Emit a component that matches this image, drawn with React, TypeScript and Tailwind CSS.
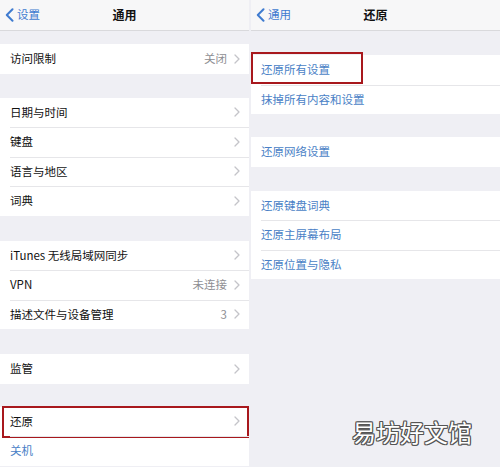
import React from 'react';

const FONT = '"Noto Sans CJK SC", "Liberation Sans", sans-serif';

type Row = { label: string; detail?: string; chevron?: boolean; blue?: boolean; mark?: 'full' | 'text' };

const Chevron = () => (
  <svg width="6" height="10" viewBox="0 0 6 10" className="ml-[7px]">
    <polyline points="1,1 5,5 1,9" fill="none" stroke="#c4c4c9" strokeWidth="1.3" strokeLinecap="round" strokeLinejoin="round" />
  </svg>
);

const BackChevron = () => (
  <svg width="9" height="14" viewBox="0 0 9 14">
    <polyline points="7.5,1.2 1.8,7 7.5,12.8" fill="none" stroke="#3f7bd0" strokeWidth="2" strokeLinecap="round" strokeLinejoin="round" />
  </svg>
);

const NavBar = ({ back, title }: { back: string; title: string }) => (
  <div className="relative h-[31px] bg-[#f7f7f8] border-b border-[#d9d9dc] flex items-center">
    <div className="flex items-center pl-[5px] gap-[3px] text-[#3f7bd0] text-[11.5px]">
      <BackChevron />
      <span>{back}</span>
    </div>
    <div className="absolute inset-0 flex items-center justify-center text-[12px] font-semibold text-[#111]">{title}</div>
  </div>
);

const Section = ({ rows, top }: { rows: Row[]; top: number }) => (
  <div className="bg-white" style={{ marginTop: top }}>
    {rows.map((r, i) => (
      <div key={r.label} className="relative h-[29.5px] flex items-center pl-[10px]">
        {i > 0 && <div className="absolute top-0 left-[10px] right-0 h-px bg-[#e6e6e9]" />}
        <span className={`text-[11.5px] ${r.blue ? 'text-[#4a7fc6]' : 'text-[#111]'}`}>{r.label}</span>
        <div className="ml-auto flex items-center pr-[9px]">
          {r.detail && <span className="text-[11.5px] text-[#8e8e93]">{r.detail}</span>}
          {r.chevron && <Chevron />}
        </div>
        {r.mark === 'full' && (
          <div className="absolute left-[2px] right-0 top-[-1px] bottom-[-2px] border-2 border-[#a8181d]" />
        )}
        {r.mark === 'text' && (
          <div className="absolute left-0 w-[112px] top-[-3px] h-[32px] border-2 border-[#a8181d]" />
        )}
      </div>
    ))}
  </div>
);

const App: React.FC = () => {
  return (
    <div className="relative w-[500px] h-[467px] overflow-hidden bg-[#efeff4] flex" style={{ fontFamily: FONT }}>
      {/* left: 通用 */}
      <div className="w-[249px]">
        <NavBar back="设置" title="通用" />
        <Section top={13} rows={[{ label: '访问限制', detail: '关闭', chevron: true }]} />
        <Section
          top={24}
          rows={[
            { label: '日期与时间', chevron: true },
            { label: '键盘', chevron: true },
            { label: '语言与地区', chevron: true },
            { label: '词典', chevron: true },
          ]}
        />
        <Section
          top={25}
          rows={[
            { label: 'iTunes 无线局域网同步', chevron: true },
            { label: 'VPN', detail: '未连接', chevron: true },
            { label: '描述文件与设备管理', detail: '3', chevron: true },
          ]}
        />
        <Section top={25} rows={[{ label: '监管', chevron: true }]} />
        <Section
          top={23}
          rows={[
            { label: '还原', chevron: true, mark: 'full' },
            { label: '关机', blue: true },
          ]}
        />
      </div>

      {/* right: 还原 */}
      <div className="w-[249px] ml-[2px]">
        <NavBar back="通用" title="还原" />
        <Section
          top={24}
          rows={[
            { label: '还原所有设置', blue: true, mark: 'text' },
            { label: '抹掉所有内容和设置', blue: true },
          ]}
        />
        <Section top={23} rows={[{ label: '还原网络设置', blue: true }]} />
        <Section
          top={24}
          rows={[
            { label: '还原键盘词典', blue: true },
            { label: '还原主屏幕布局', blue: true },
            { label: '还原位置与隐私', blue: true },
          ]}
        />
      </div>

      {/* watermark */}
      <div
        className="absolute left-[352px] top-[420px] text-[24px] leading-none text-white"
        style={{
          textShadow:
            '1px 0 0 #555, -1px 0 0 #555, 0 1px 0 #555, 0 -1px 0 #555, 1px 1px 0 #555, -1px -1px 0 #555, 1px -1px 0 #555, -1px 1px 0 #555',
        }}
      >
        易坊好文馆
      </div>
    </div>
  );
};

export default App;
